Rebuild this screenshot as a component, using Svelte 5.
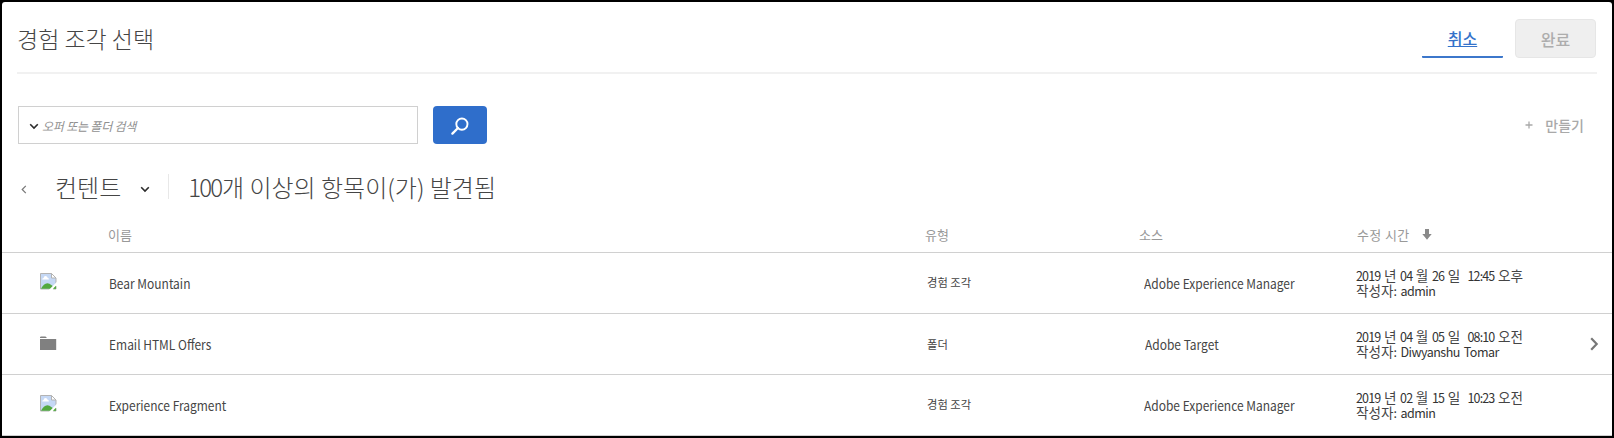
<script>
  const rows = [
    { icon: 'image', name: 'Bear Mountain', type: '경험 조각', source: 'Adobe Experience Manager', date: '2019 년 04 월 26 일  12:45 오후', author: 'admin' },
    { icon: 'folder', name: 'Email HTML Offers', type: '폴더', source: 'Adobe Target', date: '2019 년 04 월 05 일  08:10 오전', author: 'Diwyanshu Tomar' },
    { icon: 'image', name: 'Experience Fragment', type: '경험 조각', source: 'Adobe Experience Manager', date: '2019 년 02 월 15 일  10:23 오전', author: 'admin' }
  ];
  // Hangul and Latin runs are set at slightly different sizes.
  const runs = (text) => text.match(/[가-힣]+|[^가-힣]+/g);
  const isHangul = (run) => /[가-힣]/.test(run);
</script>

{#snippet chevron()}
  <svg class="chevron" width="10" height="7" viewBox="0 0 10 7"><path d="M1.2 1.2 5 5l3.8-3.8" fill="none" stroke="#2c2c2c" stroke-width="1.6" /></svg>
{/snippet}

{#snippet mixed(text, kind)}
  <span class={['line', kind]}>{#each runs(text) as run}<span class={isHangul(run) ? 'ko' : 'la'}>{run}</span>{/each}</span>
{/snippet}

<div class="frame">
  <div class="dialog">
    <header>
      <h1>경험 조각 선택</h1>
      <div class="actions">
        <button class="cancel"><span>취소</span></button>
        <button class="done" disabled><span>완료</span></button>
      </div>
    </header>

    <div class="toolbar">
      <div class="search">
        {@render chevron()}
        <span class="placeholder">오퍼 또는 폴더 검색</span>
      </div>
      <button class="go" aria-label="검색">
        <svg width="18" height="18" viewBox="0 0 18 18"><circle cx="10.9" cy="7.1" r="5.6" fill="none" stroke="#fff" stroke-width="1.9" /><path d="M7 11 1.4 16.6" stroke="#fff" stroke-width="2.3" stroke-linecap="round" /></svg>
      </button>
      <div class="create">
        <svg width="8" height="8" viewBox="0 0 8 8"><path d="M4 .5v7M.5 4h7" stroke="#a9a9a9" stroke-width="1.3" /></svg>
        <span>만들기</span>
      </div>
    </div>

    <div class="crumbs">
      <svg class="back" width="6" height="9" viewBox="0 0 6 9"><path d="M4.8.8 1.2 4.5l3.6 3.7" fill="none" stroke="#777" stroke-width="1.2" /></svg>
      <span class="folder-name">컨텐트</span>
      {@render chevron()}
      <span class="count"><span class="number">100</span>개 이상의 항목이(가) 발견됨</span>
    </div>

    <div class="row head">
      <span></span><span>이름</span><span>유형</span><span>소스</span>
      <span class="sort"><span>수정 시간</span>
        <svg width="10" height="11" viewBox="0 0 10 11"><path d="M3 0h4v5h2.7L5 10.7.3 5H3z" fill="#8a8a8a" /></svg>
      </span>
    </div>
    {#each rows as row}
      <div class={['row', 'item', row.icon]}>
        <span class="icon">
          {#if row.icon === 'folder'}
            <svg width="17" height="15" viewBox="0 0 17 15"><path d="M0 2V1.2Q.3.5 1 .5h4.5L7 2z" fill="#808080" /><path d="M0 3h16.2v11H0z" fill="#808080" /></svg>
          {:else}
            <svg width="17" height="17" viewBox="0 0 17 17">
              <path d="M.5.5h11l4.5 4.5v11H.5z" fill="#c5d8f5" stroke="#b3b3b3" />
              <path d="M2.2 6.5Q2 4.9 3.6 4.9 3.8 3 5.5 3t2.1 1.8Q9 5 8.9 6.5z" fill="#fff" />
              <path d="M1 15.8Q3.6 10.4 7.4 10.2 9.2 10.2 12 12.5L16 15.8z" fill="#53a93f" />
              <path d="M11.5.5 16 5h-4.5z" fill="#fff" stroke="#b3b3b3" />
              <path d="M8.8 17 17 8.8v3.8L12.6 17z" fill="#fff" />
              <path d="M12.8 15.8 16 12.8v3z" fill="#53a93f" />
            </svg>
          {/if}
        </span>
        <span class="name"><span class="latin">{row.name}</span></span>
        <span class="type">{row.type}</span>
        <span class="source"><span class="latin">{row.source}</span></span>
        <span class="modified">{@render mixed(row.date, 'date')}{@render mixed('작성자: ' + row.author, 'author')}</span>
        {#if row.icon === 'folder'}
          <svg class="enter" width="9" height="14" viewBox="0 0 9 14"><path d="m1.2 1.2 5.5 5.8-5.5 5.8" fill="none" stroke="#777" stroke-width="2.2" /></svg>
        {/if}
      </div>
    {/each}
  </div>
</div>

<style>
  :global(body) { overflow: hidden; }
  * { box-sizing: border-box; }
  .frame {
    width: 1614px; height: 438px; background: #000; padding: 2px;
    font-family: "Noto Sans CJK KR", sans-serif; color: #454545;
  }
  .dialog { height: 434px; background: #fff; border-radius: 3px 3px 0 0; overflow: hidden; white-space: nowrap; }
  header {
    height: 72px; margin: 0 15px; padding: 17px 1px 0 0; border-bottom: 2px solid #f1f1f1;
    display: flex; justify-content: space-between;
  }
  h1 { margin: 0; font-size: 23px; line-height: 38px; font-weight: 300; }
  .actions { display: flex; gap: 12px; }
  button { font-family: inherit; border: 0; padding: 0; display: flex; align-items: center; justify-content: center; }
  .cancel {
    width: 81px; height: 39px; background: none; border-bottom: 2px solid #3c77cb; color: #3472ca;
    font-size: 16px; font-weight: 500; text-decoration: underline; text-decoration-thickness: 1px;
    text-underline-offset: 1px; border-radius: 1px;
  }
  .done {
    width: 81px; height: 39px; background: #efefef; border: 1px solid #e6e6e6; border-radius: 4px;
    color: #adadad; font-size: 16px; font-weight: 500;
  }
  .toolbar { margin-top: 32px; padding: 0 28px 0 16px; display: flex; height: 38px; align-items: center; }
  .search { width: 400px; height: 38px; border: 1px solid #d0d0d0; display: flex; align-items: center; padding-left: 10px; }
  .placeholder { margin-left: 3px; font-size: 12px; font-style: italic; color: #909090; letter-spacing: -.2px; }
  .search .chevron { margin-top: 2px; }
  .go { margin-left: 15px; width: 54px; height: 38px; background: #2f6ecb; border-radius: 4px; }
  .go svg { margin-top: 2px; }
  .create { margin-left: auto; display: flex; align-items: center; gap: 12px; color: #a9a9a9; font-size: 14px; font-weight: 500; }
  .crumbs { height: 63px; margin: 11px 0 3px; padding-left: 19px; display: flex; align-items: center; }
  .folder-name { margin-left: 28px; font-size: 24px; font-weight: 300; }
  .crumbs .chevron { margin-left: 19px; margin-top: 5px; }
  .crumbs .back { margin-top: 5px; }
  .count { margin-left: 18px; padding-left: 19px; border-left: 1px solid #e8e8e8; font-size: 24px; line-height: 25px; font-weight: 300; }
  .number { letter-spacing: -1.9px; margin-right: 1px; }
  .row { display: grid; grid-template-columns: 106px 817px 214px 218px 1fr; align-items: center; position: relative; border-bottom: 1px solid #d0d0d0; }
  .head { height: 32px; padding-bottom: 4px; font-size: 13px; color: #999; line-height: 18px; }
  .sort { display: flex; align-items: center; gap: 12px; letter-spacing: .35px; }
  .item { height: 61px; font-size: 13.3px; }
  .icon { padding-left: 38px; line-height: 0; margin-top: -3px; }
  .folder .icon { margin-top: -1px; }
  .name { padding-left: 1px; }
  .latin { display: inline-block; transform: scaleX(.9); transform-origin: left; }
  .type { padding-left: 2px; font-size: 11.3px; }
  .image .type { margin-top: -2px; }
  .source { padding-left: 5px; }
  .folder .source { padding-left: 6px; }
  .modified { display: flex; flex-direction: column; margin-left: -1px; }
  .line { display: block; height: 15.5px; line-height: 15.5px; white-space: pre; }
  .ko { font-size: 13.6px; }
  .la { font-size: 12.5px; color: #333; letter-spacing: -.5px; word-spacing: 1.6px; }
  .date .la { letter-spacing: -.85px; word-spacing: 1.65px; }
  .enter { position: absolute; right: 13px; top: 23px; }
</style>
